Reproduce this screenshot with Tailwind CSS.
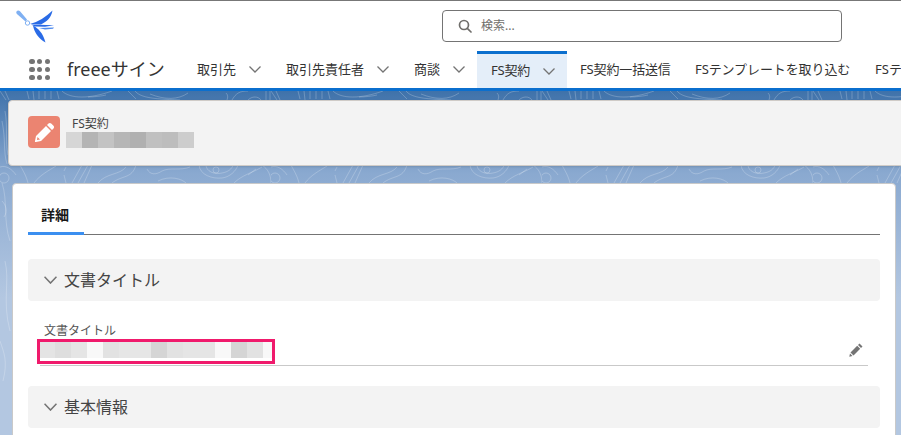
<!DOCTYPE html>
<html lang="ja">
<head>
    <meta charset="UTF-8">
    <title>FS契約</title>
    <script src="https://cdn.jsdelivr.net/npm/@tailwindcss/browser@4"></script>
</head>
<body class="w-[901px] h-[435px] overflow-hidden bg-white text-[#333] font-['Noto_Sans','Noto_Sans_CJK_JP',sans-serif]">
    <!-- global header -->
    <header class="h-[91px] bg-white border-t border-[#777] border-b-[3px] border-b-[#0b6fce] flex flex-col">
        <div class="h-[50px] flex items-start shrink-0">
            <svg class="ml-[16px] mt-[9px] w-[39px] h-[33px]" viewBox="0 0 39 33">
                <path d="M0.500 1.500 C1.500 0 3 0.300 4 1.300 L11 9.500 L9.500 11.500 L1.500 4.500 C0.300 3.500 0 2.500 0.500 1.500 Z" fill="#7fb0f2"/>
                <circle cx="11.500" cy="13" r="2.200" fill="none" stroke="#7fb0f2" stroke-width="1"/>
                <path d="M14 14 C22 12 30 7 36.500 0.500 C35 8 31 11.500 25 14.500 Z" fill="#2a6be6"/>
                <path d="M15 14.500 L38 15.200 L29 16.800 L19 16.500 Z" fill="#2a6be6"/>
                <path d="M23 18 L38 17.500 L37 18.800 L29 19.500 Z" fill="#4f8bee"/>
                <path d="M17 15.500 C22 18 27 23 29.500 32.500 C22.500 28.500 18.500 23 17 15.500 Z" fill="#2a6be6"/>
            </svg>
            <div class="ml-[387px] mt-[9px] w-[400px] h-[32px] border border-[#747474] rounded flex items-center pl-[15px] bg-white">
                <svg class="w-[14px] h-[14px] text-[#706e6b]" viewBox="0 0 14 14" fill="none" stroke="currentColor" stroke-width="1.700">
                    <circle cx="6" cy="6" r="4.500"/>
                    <path d="M9.300 9.300 L13 13" stroke-linecap="round"/>
                </svg>
                <span class="ml-[9px] text-[12px] text-[#706e6b]">検索...</span>
            </div>
        </div>
        <nav class="flex-1 flex items-stretch">
            <div class="w-[184px] shrink-0 flex items-center">
                <div class="ml-[29px] grid grid-cols-3 gap-[2.500px] w-[21px]">
                    <i class="w-[5.500px] h-[5.500px] rounded-full bg-[#747474]"></i><i class="w-[5.500px] h-[5.500px] rounded-full bg-[#747474]"></i><i class="w-[5.500px] h-[5.500px] rounded-full bg-[#747474]"></i>
                    <i class="w-[5.500px] h-[5.500px] rounded-full bg-[#747474]"></i><i class="w-[5.500px] h-[5.500px] rounded-full bg-[#747474]"></i><i class="w-[5.500px] h-[5.500px] rounded-full bg-[#747474]"></i>
                    <i class="w-[5.500px] h-[5.500px] rounded-full bg-[#747474]"></i><i class="w-[5.500px] h-[5.500px] rounded-full bg-[#747474]"></i><i class="w-[5.500px] h-[5.500px] rounded-full bg-[#747474]"></i>
                </div>
                <span class="ml-[17px] text-[18px] whitespace-nowrap text-[#333]">freeeサイン</span>
            </div>
            <a class="w-[89px] shrink-0 pl-[13px] flex items-center text-[13px] whitespace-nowrap">取引先
                <svg class="ml-[13px] w-[12px] h-[7px] text-[#747474]" viewBox="0 0 12 7" fill="none" stroke="currentColor" stroke-width="1.300"><path d="M0.500 0.500 L6 6 L11.500 0.500"/></svg></a>
            <a class="w-[128px] shrink-0 pl-[13px] flex items-center text-[13px] whitespace-nowrap">取引先責任者
                <svg class="ml-[13px] w-[12px] h-[7px] text-[#747474]" viewBox="0 0 12 7" fill="none" stroke="currentColor" stroke-width="1.300"><path d="M0.500 0.500 L6 6 L11.500 0.500"/></svg></a>
            <a class="w-[76px] shrink-0 pl-[13px] flex items-center text-[13px] whitespace-nowrap">商談
                <svg class="ml-[13px] w-[12px] h-[7px] text-[#747474]" viewBox="0 0 12 7" fill="none" stroke="currentColor" stroke-width="1.300"><path d="M0.500 0.500 L6 6 L11.500 0.500"/></svg></a>
            <a class="w-[90px] shrink-0 pl-[14px] flex items-center text-[13px] whitespace-nowrap bg-[#e4eef9] border-t-[3px] border-[#0b6fce] tracking-[-0.200px]">FS契約
                <svg class="ml-[13px] w-[12px] h-[7px] text-[#747474]" viewBox="0 0 12 7" fill="none" stroke="currentColor" stroke-width="1.300"><path d="M0.500 0.500 L6 6 L11.500 0.500"/></svg></a>
            <a class="w-[116px] shrink-0 pl-[13px] flex items-center text-[13px] whitespace-nowrap tracking-[-0.150px]">FS契約一括送信</a>
            <a class="w-[180px] shrink-0 pl-[12px] flex items-center text-[13px] whitespace-nowrap tracking-[-0.100px]">FSテンプレートを取り込む</a>
            <a class="shrink-0 pl-[12px] flex items-center text-[13px] whitespace-nowrap">FSテ</a>
        </nav>
    </header>

    <!-- page body with the contour background -->
    <main class="relative h-[344px] overflow-hidden bg-gradient-to-b from-[#3f72aa] via-[#8aa9d0] via-24% to-[#b3c7e1] to-60%">
        <svg class="absolute inset-0 w-full h-full" fill="none">
            <defs>
                <pattern id="contours" width="271" height="344" patternUnits="userSpaceOnUse">
                    <g stroke="#ffffff" stroke-opacity="0.220" stroke-width="1">
                        <!-- band under the nav -->
                        <path d="M0 0 L6 9 M5 0 L9 9"/>
                        <path d="M27 0 L29 8 M33 0 L34 9 M39 0 L39 8 M45 0 L45 8 M51 0 L51 8 M57 0 L59 8"/>
                        <path d="M62 0 C70 8 90 8 112 0"/>
                        <path d="M88 6 C94 6 102 5 106 4"/>
                        <path d="M128 0 L136 8 M135 0 C140 6 150 8 180 9"/>
                        <path d="M150 3 C165 9 178 9 188 2"/>
                        <path d="M226 2 C228 4 228 6 227 9 M232 9 C236 2 240 0 248 0"/>
                        <path d="M248 9 C252 5 258 5 261 9"/>
                        <path d="M266 0 L266 9 M270 0 L270 9"/>
                        <!-- band between the cards -->
                        <path d="M20 74 C23 80 26 84 28 92"/>
                        <path d="M34 92 C40 84 48 80 56 75"/>
                        <path d="M66 76 L64 80 M64 84 L66 92"/>
                        <path d="M72 92 L82 74 M78 92 L88 74 M84 92 L92 74"/>
                        <path d="M98 92 C106 82 120 84 126 76 M112 92 C122 84 132 88 136 74"/>
                        <path d="M147 78 C150 84 156 84 162 80 C170 76 180 80 190 76"/>
                        <path d="M158 90 C170 84 182 88 186 92"/>
                        <circle cx="216" cy="79" r="3"/>
                        <path d="M199 74 C200 84 212 88 222 87 C230 86 236 80 238 74"/>
                        <path d="M206 74 C206 80 214 84 222 82 C228 81 232 78 233 74"/>
                        <path d="M234 92 C242 84 252 82 262 76 M248 84 L256 78"/>
                        <circle cx="4" cy="87" r="5"/>
                        <path d="M262 74 C268 78 271 84 271 92"/>
                        <path d="M0 76 C6 74 12 78 16 84"/>
                        <!-- left and right strips -->
                        <path d="M2 30 C6 50 3 60 7 73 M5 20 C8 36 5 50 8 64"/>
                        <path d="M2 92 C8 110 3 130 10 150 M5 170 C10 190 2 210 10 240"/>
                        <path d="M0 250 C4 262 8 270 3 290 M2 110 C6 114 8 120 4 126"/>
                    </g>
                </pattern>
            </defs>
            <rect width="901" height="344" fill="url(#contours)"/>
        </svg>

        <!-- record header -->
        <section class="relative ml-[8px] mt-[9px] w-[960px] h-[66px] bg-[#f3f3f3] rounded border border-[#cfcbc7] flex items-start pl-[19px] pt-[15px] shadow-sm">
            <div class="w-[32px] h-[32px] rounded bg-[#eb8471] flex items-center justify-center">
                <svg class="w-[21px] h-[21px]" viewBox="0 0 21 21" fill="#fff">
                    <path d="M14.500 1.500 C15.300 0.700 16.400 0.700 17.200 1.500 L19.500 3.800 C20.300 4.600 20.300 5.700 19.500 6.500 L18 8 L13 3 Z"/>
                    <path d="M12 4 L17 9 L7 19 L2 20 C1 20.200 0.800 20 1 19 L2 14 Z M3.500 15 L3 18 L6 17.500 Z" fill-rule="evenodd"/>
                </svg>
            </div>
            <div class="ml-[6px]">
                <div class="ml-[6px] text-[12px] leading-[16px] text-[#444]">FS契約</div>
                <div class="flex h-[16px]">
                    <i class="w-[16px] bg-[#d6d6d6]"></i><i class="w-[16px] bg-[#b4b4b4]"></i><i class="w-[16px] bg-[#c3c3c3]"></i><i class="w-[16px] bg-[#b6b6b6]"></i><i class="w-[16px] bg-[#b0b0b0]"></i><i class="w-[16px] bg-[#c0c0c0]"></i><i class="w-[16px] bg-[#bdbdbd]"></i><i class="w-[16px] bg-[#cdcdcd]"></i>
                </div>
            </div>
        </section>

        <!-- detail card -->
        <section class="relative ml-[12px] mt-[17px] w-[884px] h-[260px] bg-white rounded border border-[#c9c9c9] pl-[15px] pr-[15px]">
            <div class="h-[51px] border-b border-[#747474] flex items-end">
                <div class="w-[56px] h-[48px] -mb-px border-b-[3px] border-[#3b8ff0] flex items-center justify-center pt-[9px] pr-[2px]">
                    <span class="text-[14px] font-bold text-[#181818]">詳細</span>
                </div>
            </div>

            <div class="mt-[24px] h-[42px] bg-[#f3f3f3] rounded flex items-center pl-[16px]">
                <svg class="w-[13px] h-[8px] text-[#747474]" viewBox="0 0 13 8" fill="none" stroke="currentColor" stroke-width="1.600"><path d="M0.500 0.700 L6.500 7 L12.500 0.700"/></svg>
                <span class="ml-[7px] text-[16px] text-[#444]">文書タイトル</span>
            </div>

            <div class="relative mt-[22px] ml-[12px] mr-[12px] h-[43px] border-b border-[#c9c9c9]">
                <div class="ml-[4px] text-[12px] leading-[16px] text-[#555]">文書タイトル</div>
                <div class="-ml-[3px] w-[238px] h-[25px] border-[3px] border-[#f01a6c] flex overflow-hidden">
                    <div class="flex h-[16px] w-full">
                        <i class="w-[15px] bg-[#e4e4e4]"></i><i class="w-[16px] bg-[#dedede]"></i><i class="w-[16px] bg-[#e5e5e5]"></i><i class="w-[16px] bg-[#f8f8f8]"></i><i class="w-[16px] bg-[#e2e2e2]"></i><i class="w-[32px] bg-[#e6e6e6]"></i><i class="w-[16px] bg-[#d5d5d5]"></i><i class="w-[16px] bg-[#e2e2e2]"></i><i class="w-[32px] bg-[#e5e5e5]"></i><i class="w-[16px] bg-[#f8f8f8]"></i><i class="w-[16px] bg-[#d5d5d5]"></i><i class="w-[16px] bg-[#e2e2e2]"></i><i class="w-[9px] bg-[#f8f8f8]"></i>
                    </div>
                </div>
                <svg class="absolute right-[5px] top-[20px] w-[14px] h-[14px]" viewBox="0 0 14 14" fill="#747474">
                    <path d="M10.500 0.500 L13.500 3.500 L12 5 L9 2 Z"/>
                    <path d="M8.200 2.800 L11.200 5.800 L4.500 12.500 L1.500 9.500 Z"/>
                    <path d="M1 10.500 L3.500 13 L0.300 13.700 Z"/>
                </svg>
            </div>

            <div class="mt-[20px] h-[42px] bg-[#f3f3f3] rounded flex items-center pl-[16px]">
                <svg class="w-[13px] h-[8px] text-[#747474]" viewBox="0 0 13 8" fill="none" stroke="currentColor" stroke-width="1.600"><path d="M0.500 0.700 L6.500 7 L12.500 0.700"/></svg>
                <span class="ml-[7px] text-[16px] text-[#444]">基本情報</span>
            </div>
        </section>
    </main>
</body>
</html>
